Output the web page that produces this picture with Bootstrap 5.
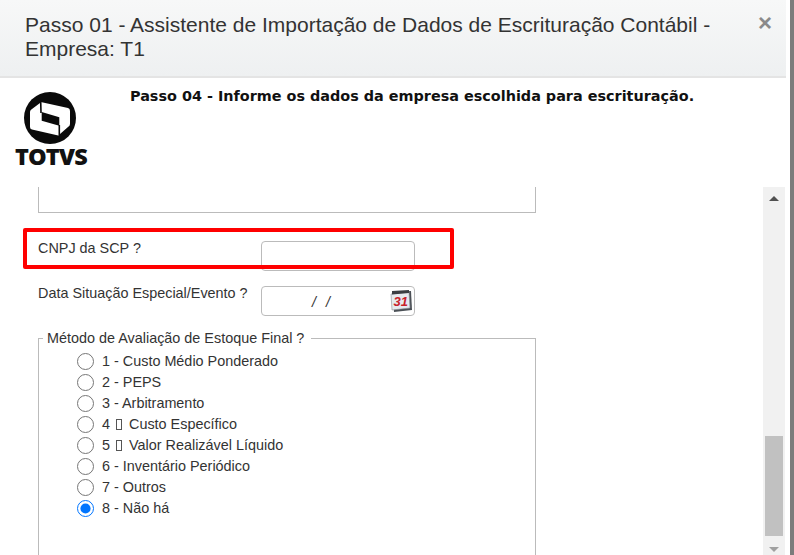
<!DOCTYPE html>
<html lang="en">
<head>
    <meta charset="UTF-8">
    <meta name="viewport" content="width=device-width, initial-scale=1.0">
    <title>Passo 01</title>
    <link href="https://cdn.jsdelivr.net/npm/bootstrap@5.3.0/dist/css/bootstrap.min.css" rel="stylesheet">
    <style>
        html, body { height: 100%; overflow: hidden; }
        body { font-family: "Liberation Sans", Arial, sans-serif; color: #333; background: #fff; }
        .wizard-shell { width: 794px; height: 555px; padding-right: 8px; position: relative; }
        .wizard-shell::after { content: ""; position: absolute; top: 0; bottom: 0; right: 0; width: 4px; background: #7c7c7c; }
        .wizard-head { height: 78px; padding: 13px 14px 0 25px; background: linear-gradient(#f7f8f8, #eef0f1); border-bottom: 2px solid #e4e4e4; }
        .wizard-title { font-size: 21px; line-height: 24px; font-weight: 400; color: #333; margin: 0; width: 700px; }
        .wizard-x { font-size: 24px; line-height: 20px; font-weight: 700; color: #8a8a8a; border: 0; background: none; padding: 0; }
        .wizard-top { height: 109px; }
        .logo-box { width: 130px; padding: 14px 0 0 15px; }
        .logo-text { font-family: "Open Sans", "Liberation Sans", sans-serif; font-weight: 800; font-size: 23.5px; line-height: 20px; color: #111; letter-spacing: -.9px; margin-top: 2px; }
        .step-text { font-family: "DejaVu Sans", Verdana, sans-serif; font-weight: 700; font-size: 14.4px; color: #111; padding-top: 8px; margin: 0; white-space: nowrap; }
        .form-area { height: 368px; position: relative; overflow: hidden; }
        .form-inner { width: 763px; padding-left: 38px; }
        .box-end { width: 498px; height: 26px; border: 1px solid #bbb; border-top: 0; margin-bottom: 28px; }
        .form-line { display: flex; font-size: 14.4px; height: 30px; color: #333; margin-bottom: 15px; }
        .form-label-x { width: 223px; line-height: 15px; }
        .field-x { width: 154px; height: 30px; border: 1px solid #bbb; border-radius: 4px; background: #fff; position: relative; }
        .date-mask { font-style: italic; position: absolute; left: 50px; top: 5px; word-spacing: 6px; }
        .cal-icon { position: absolute; right: 1px; top: 2px; }
        .red-mark { position: absolute; left: 23px; top: 41px; width: 431px; height: 41px; border: 4px solid #f00; border-radius: 2px; }
        .fs-box { width: 498px; height: 240px; border: 1px solid #bbb; border-bottom: 0; margin-top: 22px; padding: 12px 0 0 38px; position: relative; }
        .fs-legend { position: absolute; top: -9px; left: 4px; background: #fff; padding: 0 7px 0 4px; font-size: 14.4px; line-height: 16px; color: #333; }
        .radio-row { height: 21px; display: flex; align-items: center; font-size: 14.4px; color: #333; white-space: pre; }
        .radio-row input { appearance: auto; width: 17px; height: 17px; margin: 0 8px 0 0; flex: none; }
        .tofu-box { display: inline-block; width: 6px; height: 11px; border: 1px solid #555; margin: 0 7px 0 6px; }
        .scroll-track { position: absolute; top: 0; bottom: 0; left: 763px; width: 22px; background: #f1f1f1; }
        .scroll-thumb { position: absolute; left: 2px; width: 18px; top: 249px; height: 100px; background: #c1c1c1; }
        .arrow-up, .arrow-down { position: absolute; left: 6px; width: 0; height: 0; border-left: 5px solid transparent; border-right: 5px solid transparent; }
        .arrow-up { top: 9px; border-bottom: 5px solid #505050; }
        .arrow-down { bottom: 3px; border-top: 5px solid #a0a0a0; }
    </style>
</head>
<body>
    <div class="wizard-shell">
        <!-- cabecalho -->
        <div class="wizard-head d-flex justify-content-between align-items-start">
            <h5 class="wizard-title">Passo 01 - Assistente de Importação de Dados de Escrituração Contábil - Empresa: T1</h5>
            <button type="button" class="wizard-x" aria-label="Close">×</button>
        </div>

        <div class="wizard-top d-flex">
            <div class="logo-box">
                <svg width="72" height="52" viewBox="0 0 72 52" class="d-block">
                    <circle cx="35" cy="26" r="26" fill="#0a0a0a"/>
                    <path d="M15 20 Q15 18 17 17 L25 11 L25.7 10 L53 16 Q55 16.5 55 19 L55 32 Q55 34 53 35 L45 42 L44.3 43.7 L17 37.5 Q15 37 15 35 Z" fill="#fff"/>
                    <path d="M26.7 20 L44.3 25.3 L44.3 33.7 L26.7 28.7 Z" fill="#0a0a0a"/>
                    <path d="M25.7 9 L26 21 M44.3 33 L44.3 45" stroke="#0a0a0a" stroke-width="1.6" fill="none"/>
                </svg>
                <div class="logo-text">TOTVS</div>
            </div>
            <p class="step-text">Passo 04 - Informe os dados da empresa escolhida para escrituração.</p>
        </div>

        <div class="form-area">
            <div class="form-inner">
                <div class="box-end"></div>
                <div class="form-line">
                    <div class="form-label-x">CNPJ da SCP ?</div>
                    <div class="field-x"></div>
                </div>
                <div class="form-line">
                    <div class="form-label-x">Data Situação Especial/Evento ?</div>
                    <div class="field-x">
                        <span class="date-mask">/ /</span>
                        <svg class="cal-icon" width="24" height="25" viewBox="0 0 24 25">
                            <path d="M4 3 L22 2 L23 21 L5 23 Z" fill="#4a4f55"/>
                            <path d="M2 5 L20 3 L21 19 L3 21 Z" fill="#e6e9ee" stroke="#8a8f95" stroke-width=".6"/>
                            <path d="M3 2 L20 1 L20 4 L3 5.5 Z" fill="#3a3d42"/>
                            <text x="4.5" y="17" font-family="Liberation Sans" font-size="13" font-weight="700" font-style="italic" fill="#c8202a">31</text>
                        </svg>
                    </div>
                </div>
                <div class="fs-box">
                    <div class="fs-legend">Método de Avaliação de Estoque Final ?</div>
                    <label class="radio-row"><input type="radio" name="metodo">1 - Custo Médio Ponderado</label>
                    <label class="radio-row"><input type="radio" name="metodo">2 - PEPS</label>
                    <label class="radio-row"><input type="radio" name="metodo">3 - Arbitramento</label>
                    <label class="radio-row"><input type="radio" name="metodo">4<span class="tofu-box"></span>Custo Específico</label>
                    <label class="radio-row"><input type="radio" name="metodo">5<span class="tofu-box"></span>Valor Realizável Líquido</label>
                    <label class="radio-row"><input type="radio" name="metodo">6 - Inventário Periódico</label>
                    <label class="radio-row"><input type="radio" name="metodo">7 - Outros</label>
                    <label class="radio-row"><input type="radio" name="metodo" checked>8 - Não há</label>
                </div>
            </div>
            <div class="red-mark"></div>
            <div class="scroll-track">
                <div class="arrow-up"></div>
                <div class="scroll-thumb"></div>
                <div class="arrow-down"></div>
            </div>
        </div>
    </div>
    <script src="https://cdn.jsdelivr.net/npm/bootstrap@5.3.0/dist/js/bootstrap.bundle.min.js"></script>
</body>
</html>
